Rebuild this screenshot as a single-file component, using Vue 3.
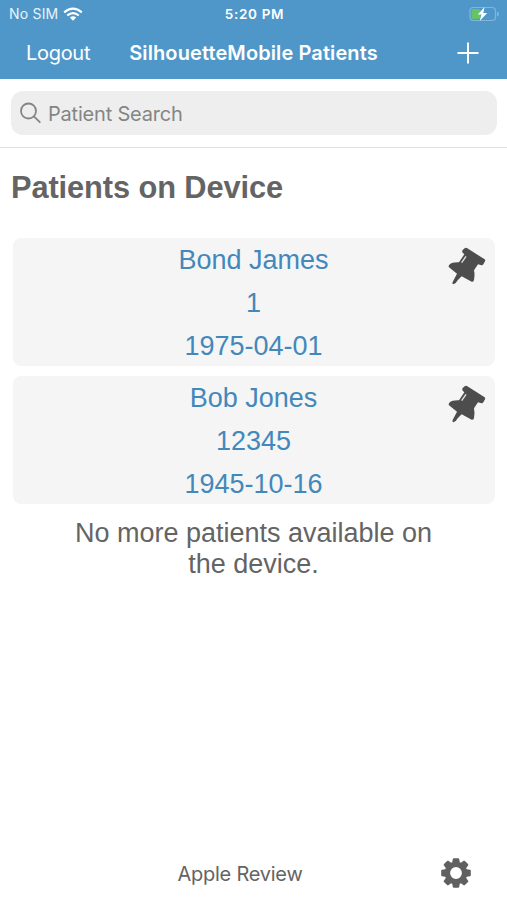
<template>
  <div class="app">
    <header class="header">
      <div class="status-bar">
        <div class="carrier">
          <span class="sim">No SIM</span>
          <svg class="wifi" width="20" height="14" viewBox="0 0 20 14">
            <path d="M1.2 5.4 Q10 -2.2 18.8 5.4" />
            <path d="M4.2 8.5 Q10 3.6 15.8 8.5" />
            <path class="dot" d="M6.8 10.5 Q10 8 13.2 10.5 L10 13.7 Z" />
          </svg>
        </div>
        <span class="time">5:20 PM</span>
        <svg class="battery" width="31" height="16" viewBox="0 0 31 16">
          <rect class="shell" x="1" y="1.5" width="25.5" height="13" rx="3.5" />
          <path class="cap" d="M28 5.5 Q30 6 30 8 Q30 10 28 10.5 Z" />
          <rect class="charge" x="2.5" y="3" width="9" height="10" rx="2" />
          <path class="bolt" d="M15.6 1 L8.8 8.6 H12.4 L10.7 15 L18.2 6.9 H14.3 Z" />
        </svg>
      </div>
      <nav class="nav-bar">
        <button class="logout">Logout</button>
        <h1 class="title">SilhouetteMobile Patients</h1>
        <button class="add" aria-label="Add patient">
          <svg width="22" height="22" viewBox="0 0 22 22">
            <path d="M11 .5 V21.5 M.5 11 H21.5" />
          </svg>
        </button>
      </nav>
    </header>

    <div class="search">
      <label class="search-box">
        <svg width="22" height="22" viewBox="0 0 22 22">
          <circle cx="8.5" cy="9" r="7.5" />
          <path d="M13.9 14.4 L19.8 20.2" />
        </svg>
        <span class="placeholder">Patient Search</span>
      </label>
    </div>

    <main class="content">
      <h2 class="heading">Patients on Device</h2>

      <ul class="patients">
        <li v-for="patient in patients" :key="patient.id" class="patient">
          <p>{{ patient.name }}</p>
          <p>{{ patient.id }}</p>
          <p>{{ patient.birthDate }}</p>
          <svg class="pin" width="40" height="40" viewBox="50 48 120 120">
            <path d="M97 68 Q94 64 97 60 L104 54 Q107 52 111 55 L163 88 Q166 91 164 94 L159 103 Q156 107 151 105 L143 103 L131 121 Q134 135 131 150 Q130 157 124 155 L94 139 L82 151 Q78 160 69 163 Q65 163 67 156 L80 131 L56 112 Q53 109 57 104 Q66 96 86 97 L102 73 Z" />
            <path class="shine" d="M107 79 L94 98" />
          </svg>
        </li>
      </ul>

      <p class="message">No more patients available on the device.</p>
    </main>

    <footer class="footer">
      <span class="user">Apple Review</span>
      <button class="settings" aria-label="Settings">
        <svg width="30" height="30" viewBox="-15 -15 30 30">
          <path
            v-for="angle in toothAngles"
            :key="angle"
            :transform="`rotate(${angle})`"
            d="M-4 -9 L-3.2 -14 Q-3 -14.8 -2.2 -14.8 H2.2 Q3 -14.8 3.2 -14 L4 -9 Z"
          />
          <circle class="ring" r="8.6" />
        </svg>
      </button>
    </footer>
  </div>
</template>

<script setup>
const patients = [
  { name: 'Bond James', id: '1', birthDate: '1975-04-01' },
  { name: 'Bob Jones', id: '12345', birthDate: '1945-10-16' },
];

const toothAngles = [0, 45, 90, 135, 180, 225, 270, 315];
</script>

<style>
body {
  margin: 0;
  background: #ffffff;
}
</style>

<style scoped>
.app {
  display: flex;
  flex-direction: column;
  height: 900px;
  overflow: hidden;
  font-family: 'Inter', sans-serif;
  color: #646464;
}

h1,
h2,
p,
ul {
  margin: 0;
  padding: 0;
}

button {
  padding: 0;
  border: none;
  background: none;
  font-family: inherit;
  color: inherit;
}

svg {
  display: block;
  flex-shrink: 0;
}

.header {
  height: 79px;
  background: #4f97c9;
  color: #ffffff;
}

.status-bar {
  display: grid;
  grid-template-columns: 1fr auto 1fr;
  align-items: center;
  height: 27px;
  padding: 0 7px 0 9px;
}

.carrier {
  display: flex;
  align-items: center;
  gap: 5px;
}

.sim {
  font-size: 14px;
  letter-spacing: 0.2px;
  color: #e8f3fa;
}

.wifi {
  fill: none;
  stroke: #ffffff;
  stroke-width: 2.2;
}

.wifi .dot {
  fill: #ffffff;
  stroke: none;
}

.time {
  font-size: 13.5px;
  font-weight: 600;
  letter-spacing: 0.7px;
}

.battery {
  justify-self: end;
}

.shell {
  fill: none;
  stroke: #82b5da;
  stroke-width: 1.2;
}

.cap {
  fill: #82b5da;
}

.charge {
  fill: #65c466;
}

.bolt {
  fill: #ffffff;
}

.nav-bar {
  display: grid;
  grid-template-columns: 1fr auto 1fr;
  align-items: center;
  height: 51px;
  padding: 0 28px 0 26px;
}

.logout {
  justify-self: start;
  font-size: 20px;
  letter-spacing: -0.3px;
}

.title {
  padding-left: 2px;
  font-size: 20px;
  font-weight: 600;
  letter-spacing: 0.1px;
  white-space: nowrap;
}

.add {
  justify-self: end;
}

.add svg {
  stroke: #ffffff;
  stroke-width: 2;
}

.search {
  box-sizing: border-box;
  height: 69px;
  padding: 12px 10px 0 11px;
  border-bottom: 1px solid #e2e2e2;
}

.search-box {
  display: flex;
  align-items: center;
  gap: 6px;
  height: 44px;
  padding-left: 9px;
  border-radius: 12px;
  background: #eeeeee;
}

.search-box svg {
  fill: none;
  stroke: #858585;
  stroke-width: 1.8;
  stroke-linecap: round;
}

.placeholder {
  padding-top: 2px;
  font-size: 20px;
  letter-spacing: -0.2px;
  color: #858585;
}

.content {
  flex: 1;
  font-family: 'Liberation Sans', sans-serif;
}

.heading {
  padding: 20px 0 0 11px;
  font-size: 30.8px;
  font-weight: bold;
  line-height: 40px;
  letter-spacing: -0.1px;
}

.patients {
  display: flex;
  flex-direction: column;
  gap: 10px;
  padding: 30px 12px 0 13px;
  list-style: none;
}

.patient {
  position: relative;
  box-sizing: border-box;
  height: 128px;
  padding: 1px 1px 0 0;
  border-radius: 8px;
  background: #f5f5f5;
  text-align: center;
  font-size: 27px;
  line-height: 42.8px;
  color: #4388bb;
}

.pin {
  position: absolute;
  top: 8px;
  right: 8px;
  fill: #4d4d4d;
}

.shine {
  stroke: #e5e5e5;
  stroke-width: 4;
}

.message {
  padding: 14px 60px 0;
  text-align: center;
  font-size: 27px;
  line-height: 31px;
}

.footer {
  display: grid;
  grid-template-columns: 1fr auto 1fr;
  align-items: center;
  height: 54px;
  padding: 0 36px 0 9px;
}

.user {
  grid-column: 2;
  padding-top: 1px;
  font-size: 20px;
  letter-spacing: -0.25px;
}

.settings {
  justify-self: end;
}

.settings svg {
  fill: #606060;
}

.settings .ring {
  fill: none;
  stroke: #606060;
  stroke-width: 5.4;
}
</style>
